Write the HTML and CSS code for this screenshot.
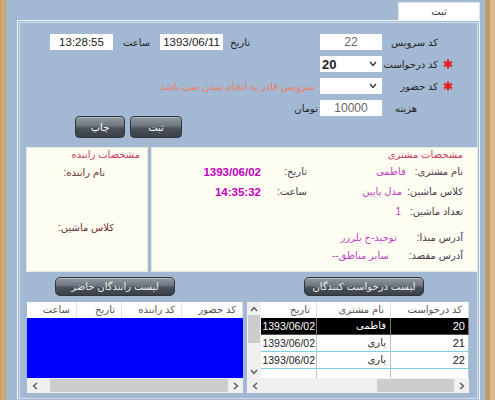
FILE: index.html
```html
<!DOCTYPE html>
<html lang="fa">
<head>
<meta charset="utf-8">
<title>ثبت سرویس</title>
<link rel="stylesheet" href="styles.css">
</head>
<body>
<div class="edge-l"></div>
<div class="main">
  <div class="tabs"><div class="tab">ثبت</div></div>
  <div class="panel">
    <div class="form">
      <span></span>
      <span class="lbl">کد سرویس</span>
      <div class="box num">22</div>
      <div class="datetime">
        <span class="dl">تاریخ</span>
        <div class="box dt">1393/06/11</div>
        <span class="tl">ساعت</span>
        <div class="box dt">13:28:55</div>
      </div>

      <span class="star"><svg width="10" height="10" viewBox="0 0 10 10"><path d="M5 0.5V9.5M1 2.8L9 7.2M1 7.2L9 2.8" stroke="#e41e1e" stroke-width="2.2"/></svg></span>
      <span class="lbl">کد درخواست</span>
      <div class="select"><b>20</b><svg width="8" height="6" viewBox="0 0 8 6"><polyline points="1,1 4,4.5 7,1" fill="none" stroke="#333" stroke-width="1.3"/></svg></div>
      <span></span>

      <span class="star"><svg width="10" height="10" viewBox="0 0 10 10"><path d="M5 0.5V9.5M1 2.8L9 7.2M1 7.2L9 2.8" stroke="#e41e1e" stroke-width="2.2"/></svg></span>
      <span class="lbl">کد حضور</span>
      <div class="select"><b></b><svg width="8" height="6" viewBox="0 0 8 6"><polyline points="1,1 4,4.5 7,1" fill="none" stroke="#333" stroke-width="1.3"/></svg></div>
      <span class="err">سرویس قادر به انجام شدن نمی باشد</span>

      <span></span>
      <span class="lbl fee">هزینه</span>
      <div class="box num">10000</div>
      <span class="toman">تومان</span>
    </div>

    <div class="actions">
      <button class="btn act1">ثبت</button>
      <button class="btn act2">چاپ</button>
    </div>

    <div class="lower">
      <div class="card cust">
        <div class="title">مشخصات مشتری</div>
        <div class="crows">
          <div class="crow">
            <div class="pair"><span class="k">نام مشتری:</span><span class="val">فاطمی</span></div>
            <div class="pair2"><span class="k lbl2">تاریخ:</span><span class="bold">1393/06/02</span></div>
          </div>
          <div class="crow">
            <div class="pair narrow"><span class="k">کلاس ماشین:</span><span class="val">مدل پایین</span></div>
            <div class="pair2"><span class="k lbl2">ساعت:</span><span class="bold">14:35:32</span></div>
          </div>
          <div class="crow">
            <div class="pair"><span class="k">تعداد ماشین:</span><span class="val">1</span></div>
          </div>
          <div class="addrs">
            <div class="crow">
              <div class="pair wide"><span class="k">آدرس مبدا:</span><span class="val">توحید-خ بلرزر</span></div>
            </div>
            <div class="crow">
              <div class="pair wide"><span class="k">آدرس مقصد:</span><span class="val">سایر مناطق--</span></div>
            </div>
          </div>
        </div>
      </div>
      <div class="card drv">
        <div class="title">مشخصات راننده</div>
        <div class="dname">نام راننده:</div>
        <div class="dclass">کلاس ماشین:</div>
      </div>
    </div>

    <div class="bottom">
      <div class="col-r">
        <button class="btn lbtn lbtn-r">لیست درخواست کنندگان</button>
        <div class="grid rgrid">
          <div class="gmain">
            <div class="vscroll">
              <div class="vs-btn"><svg width="8" height="6" viewBox="0 0 8 6"><polyline points="1,5 4,1.5 7,5" fill="none" stroke="#555" stroke-width="1.3"/></svg></div>
              <div class="vs-thumb"></div>
              <div class="vs-track"></div>
              <div class="vs-btn"><svg width="8" height="6" viewBox="0 0 8 6"><polyline points="1,1 4,4.5 7,1" fill="none" stroke="#555" stroke-width="1.3"/></svg></div>
            </div>
            <div class="tbl">
              <div class="th">تاریخ</div><div class="th">نام مشتری</div><div class="th">کد درخواست</div>
              <div class="td s date">1393/06/02</div><div class="td s">فاطمی</div><div class="td s n">20</div>
              <div class="td date">1393/06/02</div><div class="td">یاری</div><div class="td n">21</div>
              <div class="td date">1393/06/02</div><div class="td">یاری</div><div class="td n">22</div>
              <div class="td part"></div><div class="td part"></div><div class="td part"></div>
            </div>
          </div>
          <div class="hscroll">
            <div class="hs-btn"><svg width="6" height="8" viewBox="0 0 6 8"><polyline points="5,1 1.5,4 5,7" fill="none" stroke="#555" stroke-width="1.4"/></svg></div>
            <div class="hs-track"></div>
            <div class="hs-thumb rthumb"></div>
            <div class="hs-btn"><svg width="6" height="8" viewBox="0 0 6 8"><polyline points="1,1 4.5,4 1,7" fill="none" stroke="#555" stroke-width="1.4"/></svg></div>
          </div>
        </div>
      </div>
      <div class="col-l">
        <button class="btn lbtn lbtn-l">لیست رانندگان حاضر</button>
        <div class="grid lgrid">
          <div class="ltbl">
            <div class="th">ساعت</div><div class="th">تاریخ</div><div class="th">کد راننده</div><div class="th">کد حضور</div>
            <div class="blue"></div>
          </div>
          <div class="hscroll">
            <div class="hs-btn"><svg width="6" height="8" viewBox="0 0 6 8"><polyline points="5,1 1.5,4 5,7" fill="none" stroke="#555" stroke-width="1.4"/></svg></div>
            <div class="hs-gap"></div>
            <div class="hs-thumb lthumb"></div>
            <div class="hs-btn"><svg width="6" height="8" viewBox="0 0 6 8"><polyline points="1,1 4.5,4 1,7" fill="none" stroke="#555" stroke-width="1.4"/></svg></div>
          </div>
        </div>
      </div>
    </div>
  </div>
</div>
<div class="edge-r"></div>
</body>
</html>
```

FILE: styles.css
```css
html, body {
  margin: 0;
  padding: 0;
}
body {
  width: 495px;
  height: 400px;
  overflow: hidden;
  display: flex;
  font-family: "Liberation Sans", "DejaVu Sans", sans-serif;
  font-size: 10px;
  color: #222;
  background: #c9a473;
}
.edge-l {
  width: 6px;
  flex: none;
  background: linear-gradient(90deg, #c39a66, #d3ae7d 60%, #bf9663);
}
.edge-r {
  width: 10px;
  flex: none;
  background: linear-gradient(90deg, #c19969 0 5px, #d8b88c 5px);
}
.main {
  width: 479px;
  flex: none;
  box-sizing: border-box;
  background: #a3b9d3;
  padding: 0 5px 0 11px;
  display: flex;
  flex-direction: column;
}
.tabs {
  height: 20px;
  display: flex;
  justify-content: flex-end;
  align-items: flex-end;
}
.tab {
  width: 82px;
  height: 18px;
  box-sizing: border-box;
  background: #fff;
  border: 1px solid #dde4ec;
  border-bottom: 0;
  text-align: center;
  line-height: 17px;
  color: #333;
}
.panel {
  flex: 1;
  direction: rtl;
  border: 1px solid #f2f6fb;
  border-bottom: 0;
  box-shadow: inset 0 0 0 1px #a3b9d3, inset 0 0 0 2px #d2deec;
}

/* top form */
.form {
  display: grid;
  grid-template-columns: 14px 59px 62px 1fr;
  grid-auto-rows: 16px;
  row-gap: 6px;
  align-items: center;
  padding: 13px 24px 0 0;
}
.star {
  display: flex;
  justify-content: center;
  align-items: center;
  height: 16px;
}
.lbl {
  padding-right: 3px;
  white-space: nowrap;
  color: #222;
}
.fee {
  padding-right: 24px;
}
.box {
  background: #fff;
  height: 16px;
  line-height: 16px;
  text-align: center;
  font-size: 11.5px;
  color: #222;
}
.num {
  color: #666;
  font-size: 12px;
}
.select {
  direction: ltr;
  display: flex;
  justify-content: space-between;
  align-items: center;
  background: #fff;
  height: 16px;
  padding: 0 5px 0 2px;
}
.select b {
  font-size: 13px;
}
.datetime {
  display: flex;
  align-items: center;
  margin-right: 70px;
}
.dl {
  width: 27px;
  text-align: right;
}
.dt {
  width: 63px;
}
.tl {
  width: 47px;
  text-align: center;
}
.err {
  color: #f4785a;
  padding-right: 5px;
  white-space: nowrap;
}
.toman {
  padding-right: 2px;
}

/* buttons */
.btn {
  font-family: inherit;
  font-size: 10px;
  color: #fff;
  border: 1px solid #2e353c;
  border-radius: 4px;
  background: linear-gradient(#939ca5, #6c757e 45%, #4a525a 55%, #3a4148);
  box-shadow: inset 0 1px 0 rgba(255, 255, 255, 0.35);
  padding: 0;
  box-sizing: border-box;
}
.actions {
  display: flex;
  gap: 5px;
  padding-right: 297px;
}
.act1 {
  width: 52px;
  height: 22px;
}
.act2 {
  width: 50px;
  height: 22px;
}

/* info cards */
.lower {
  display: flex;
  gap: 3px;
  margin-top: 9px;
  padding: 0 1px 0 8px;
}
.card {
  background: #fdfdf1;
  border: 1px solid #e6e9e0;
  box-sizing: border-box;
  height: 125px;
}
.cust {
  width: 327px;
  flex: none;
  padding-right: 14px;
}
.drv {
  flex: 1;
  padding-right: 7px;
}
.title {
  line-height: 14px;
  color: #c8405c;
  white-space: nowrap;
}
.crows {
  display: flex;
  flex-direction: column;
  gap: 6px;
  margin-top: 3px;
}
.addrs {
  display: flex;
  flex-direction: column;
  gap: 4px;
  margin-top: 6px;
}
.crow {
  display: flex;
  height: 14px;
  line-height: 14px;
  white-space: nowrap;
}
.pair {
  width: 156px;
  flex: none;
  display: flex;
  gap: 9px;
}
.pair.narrow {
  gap: 5px;
}
.pair.wide {
  gap: 20px;
}
.pair2 {
  display: flex;
}
.lbl2 {
  width: 46px;
}
.k {
  color: #4a3a4a;
}
.val {
  color: #c044c0;
}
.bold {
  font-weight: bold;
  font-size: 11.5px;
  color: #c000c0;
}
.dname {
  margin-top: 4px;
  padding-right: 35px;
  line-height: 14px;
  color: #6a3030;
}
.dclass {
  margin-top: 41px;
  padding-right: 26px;
  line-height: 14px;
  color: #6a3030;
}

/* bottom lists */
.bottom {
  display: flex;
  margin-top: 5px;
  padding: 0 1px 0 8px;
}
.col-r {
  width: 233px;
  flex: none;
}
.col-l {
  width: 219px;
  flex: none;
}
.lbtn {
  display: block;
  width: 120px;
  height: 19px;
  border-radius: 5px;
  color: #eef0f2;
}
.lbtn-r {
  margin-right: 54px;
}
.lbtn-l {
  margin-right: 70px;
}
.grid {
  direction: ltr;
  margin-top: 6px;
  background: #f0f0f0;
}
.rgrid {
  width: 222px;
  margin-right: 9px;
}
.lgrid {
  width: 216px;
  margin-right: 2px;
}
.gmain {
  display: flex;
  height: 76px;
}
.vscroll {
  width: 14px;
  flex: none;
  display: flex;
  flex-direction: column;
  background: #f0f0f0;
}
.vs-btn {
  height: 13px;
  display: flex;
  align-items: center;
  justify-content: center;
}
.vs-thumb {
  height: 28px;
  margin: 0 1px;
  background: #cdcdcd;
}
.vs-track {
  flex: 1;
}
.tbl {
  flex: 1;
  display: grid;
  grid-template-columns: 56px 74px 1fr;
  grid-template-rows: 16px 17px 17px 17px 9px;
  background: #fff;
  overflow: hidden;
}
.ltbl {
  display: grid;
  grid-template-columns: 50px 45px 60px 1fr;
  grid-template-rows: 16px 60px;
  background: #fff;
}
.th {
  direction: rtl;
  text-align: right;
  padding-right: 6px;
  line-height: 16px;
  color: #555;
  background: #fff;
  border-right: 1px solid #e2e2e2;
  white-space: nowrap;
  overflow: hidden;
}
.td {
  direction: rtl;
  text-align: right;
  padding-right: 4px;
  line-height: 16px;
  color: #222;
  border-right: 1px solid #b4c6cc;
  border-bottom: 1px solid #7ccfe6;
  white-space: nowrap;
  overflow: hidden;
}
.td.n {
  font-size: 11px;
  padding-right: 3px;
}
.td.date {
  font-size: 10.5px;
  padding-right: 1px;
}
.td.s {
  background: #000;
  color: #fff;
  border-right-color: #777;
  border-bottom-color: #555;
}
.td.part {
  border-bottom: 0;
}
.blue {
  grid-column: 1 / -1;
  background: #0000fe;
}
.hscroll {
  height: 15px;
  display: flex;
  background: #f0f0f0;
}
.hs-btn {
  width: 15px;
  flex: none;
  display: flex;
  align-items: center;
  justify-content: center;
}
.hs-track {
  flex: 1;
}
.hs-gap {
  width: 8px;
}
.hs-thumb {
  margin: 1px 0;
  background: #cdcdcd;
}
.rthumb {
  width: 77px;
}
.lthumb {
  flex: 1;
}
```
